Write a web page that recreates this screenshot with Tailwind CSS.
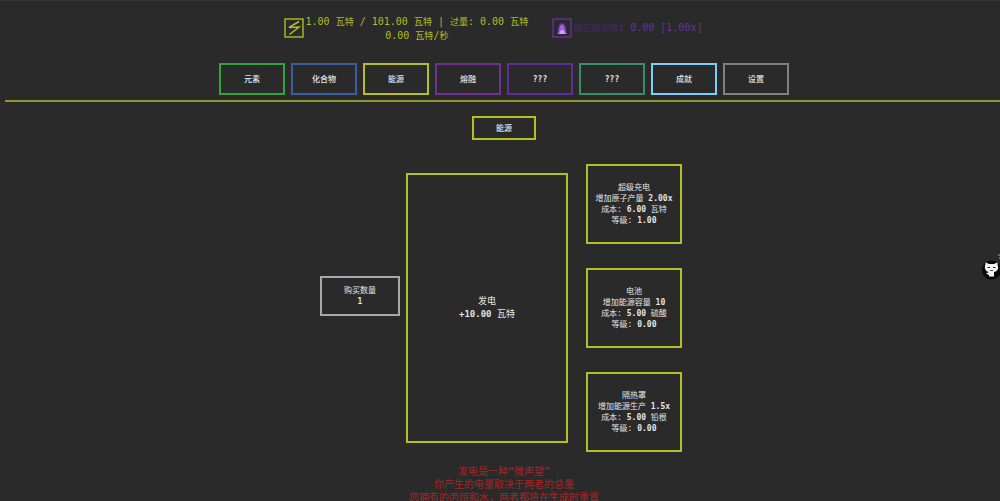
<!DOCTYPE html>
<html lang="zh-CN">
<head>
<meta charset="utf-8">
<title>能源</title>
<script src="https://cdn.jsdelivr.net/npm/@tailwindcss/browser@4"></script>
</head>
<body class="h-screen overflow-hidden border-t border-[#353535] bg-[#2a2a2a] font-['DejaVu_Sans_Mono','Noto_Sans_CJK_SC',monospace] text-[8px] leading-[11px] text-[#e4e4e4]">
<header class="flex h-[62px] items-start justify-center gap-6 pt-[14px] pr-[14px] text-[10px] leading-[13px]">
  <div class="flex gap-[2px] text-[#b1bb26]">
    <svg class="mt-[3px] size-5 shrink-0" viewBox="0 0 20 20" fill="none" stroke="currentColor" role="img" aria-label="能源">
      <rect x="1" y="1" width="18" height="18" stroke-width="1.4"/>
      <path d="M15 3.500 5 9.500 15 9 5.500 16.500" stroke-width="1.500"/>
    </svg>
    <p class="text-center">1.00 <span class="text-[9px]">瓦特</span> / 101.00 <span class="text-[9px]">瓦特</span> | <span class="text-[9px]">过量</span>: 0.00 <span class="text-[9px]">瓦特</span><br>0.00 <span class="text-[9px]">瓦特</span>/<span class="text-[9px]">秒</span></p>
  </div>
  <div class="mt-[3px] flex items-center gap-px text-[#67309a]">
    <svg class="size-5 shrink-0" viewBox="0 0 20 20" role="img" aria-label="堆芯熔化物">
      <rect x="1" y="1" width="18" height="18" fill="none" stroke="currentColor" stroke-width="1.4"/>
      <path d="M4 16c2-1 1.500-4 2.500-8Q8 5 10 5t3.500 3c1 4 .5 7 2.500 8z" fill="#65339f"/>
      <path d="M6 16c1.500-2 1-5 2-8Q9 6.500 10 6.500t2 1.500c1 3 .5 6 2.500 8z" fill="#a15fe4"/>
      <path d="M7 16 9 12h2.500l2 4z" fill="#d4a0ff"/>
    </svg>
    <p><span class="text-[9px] text-[#4b246b]">堆芯熔化物</span>: 0.00 [1.00x]</p>
  </div>
</header>

<nav class="flex justify-center gap-[6px] pl-2 font-bold" aria-label="主菜单">
  <button class="h-8 w-[66px] border-2 border-[#32a43e] font-medium">元素</button>
  <button class="h-8 w-[66px] border-2 border-[#3b5da2] font-medium">化合物</button>
  <button class="h-8 w-[66px] border-2 border-[#b5bf25] font-medium">能源</button>
  <button class="h-8 w-[66px] border-2 border-[#6c3193] font-medium">熔融</button>
  <button class="h-8 w-[66px] border-2 border-[#593096]">???</button>
  <button class="h-8 w-[66px] border-2 border-[#319067]">???</button>
  <button class="h-8 w-[66px] border-2 border-[#7dccfa] font-medium">成就</button>
  <button class="h-8 w-[66px] border-2 border-[#808080] font-medium">设置</button>
</nav>
<hr class="mt-[5px] ml-[5px] border-t-2 border-[#8f962a]">

<main class="pl-2">
  <div class="mt-[14px] flex justify-center">
    <button class="h-6 w-16 border-2 border-[#b5bf25] font-medium">能源</button>
  </div>
  <section class="mt-6 flex items-center justify-center pr-[6px]">
    <button class="mr-[6px] mb-6 h-10 w-20 border-2 border-[#a8a8a8]">购买数量<br><b>1</b></button>
    <button class="mr-[18px] h-[270px] w-[162px] border-2 border-[#b5bf25] text-[9px] leading-[13px]">发电<br><b>+10.00</b> 瓦特</button>
    <div class="flex flex-col gap-6">
      <button class="h-20 w-24 border-2 border-[#b5bf25] whitespace-nowrap">超级充电<br>增加原子产量 <b>2.00x</b><br>成本: <b>6.00</b> 瓦特<br>等级: <b>1.00</b></button>
      <button class="h-20 w-24 border-2 border-[#b5bf25] whitespace-nowrap">电池<br>增加能源容量 <b>10</b><br>成本: <b>5.00</b> 硫酸<br>等级: <b>0.00</b></button>
      <button class="h-20 w-24 border-2 border-[#b5bf25] whitespace-nowrap">隔热罩<br>增加能源生产 <b>1.5x</b><br>成本: <b>5.00</b> 铅根<br>等级: <b>0.00</b></button>
    </div>
  </section>
  <p class="mt-[13px] text-center text-[10px] leading-[13px] text-[#a32626]">发电是一种“微声望”<br>你产生的电量取决于两者的总量<br>您拥有的丙烷和水，两者都将在生成时重置</p>
</main>

<a href="#github" aria-label="GitHub" class="fixed top-[252px] right-0 block">
  <svg class="h-7 w-[18px]" viewBox="0 0 18 28">
    <circle cx="9.500" cy="18" r="9.500" fill="#090909"/>
    <path d="M3.500 12Q3 10.500 4 10.500L7 12h5l3-1.500q1 0 .5 2.500 1.500 3-.5 5.500-1 1.200-3 1.500v4.500H7V23l-3-1.500 3-1.500q-2-.3-3-1.500-2-2.500-.5-6.500z" fill="#f4f4f4"/>
    <path d="M5.500 15h2.500v1H5.500zM11 15h2.500v1H11z M8 18h3v.8H8z" fill="#222"/>
    <path d="M16 3h2M17 6h1" stroke="#aaa"/>
  </svg>
</a>
</body>
</html>
